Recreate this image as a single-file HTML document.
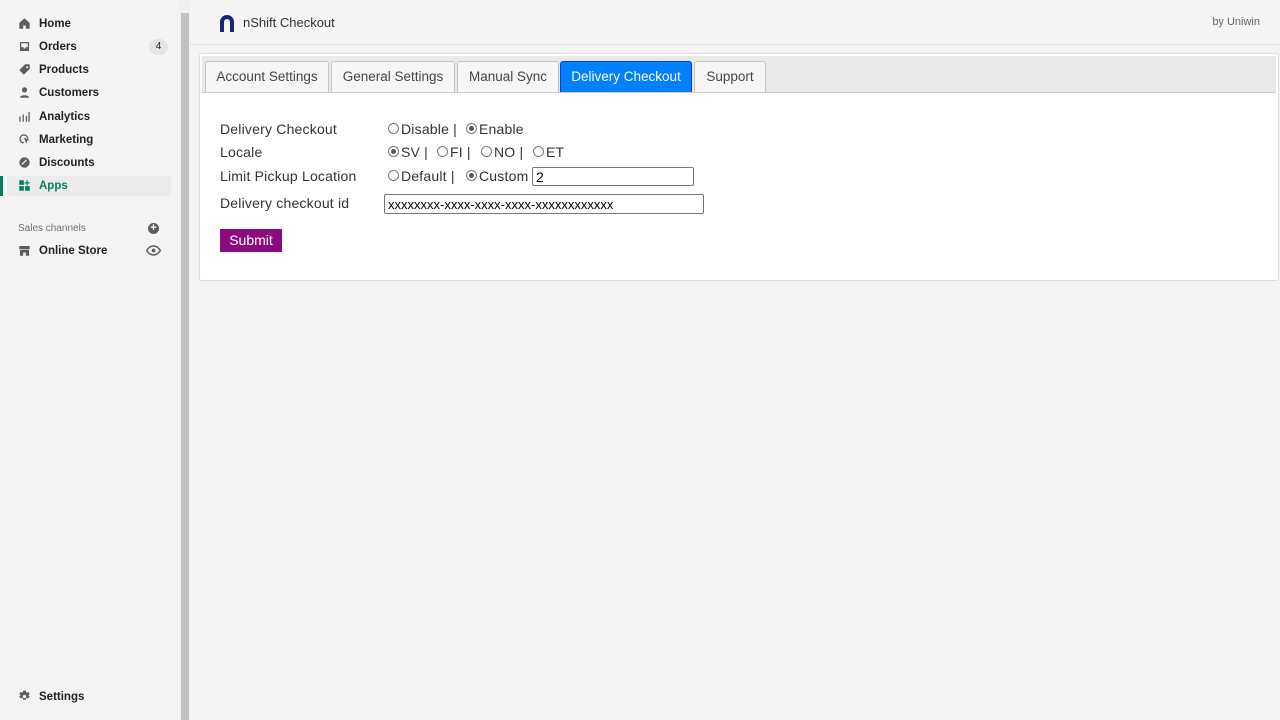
<!DOCTYPE html>
<html><head><style>
body{margin:0;width:1280px;height:720px;background:#f4f4f4;font-family:"Liberation Sans",sans-serif;position:relative;overflow:hidden}
.side{position:absolute;left:0;top:0;width:179px;height:720px;background:#f4f4f4}
.item{position:absolute;left:18px;font-size:11.5px;font-weight:bold;color:#202223;display:flex;align-items:center}
.item svg{width:13px;height:13px;margin-right:8px;fill:#5c5f62}
.scroll{position:absolute;left:179px;top:0;width:11px;height:720px;background:#f0f0f0}
.thumb{position:absolute;left:181px;top:13px;width:8px;height:707px;background:#c1c1c1}
.hdr{position:absolute;left:190px;top:0;width:1090px;height:44px;background:#f5f5f5;border-bottom:1px solid #e1e1e1}
.panel{position:absolute;left:199px;top:53px;width:1078px;height:226px;background:#fff;border:1px solid #ddd;border-radius:3px}
.tabs{position:absolute;left:2px;top:2px;right:2px;height:36px;background:#e9e9e9;border-bottom:1px solid #ccc}
.tab{position:absolute;top:5px;height:30px;background:#f6f6f6;border:1px solid #c5c5c5;border-bottom:none;border-radius:3px 3px 0 0;font-size:13.5px;color:#454545;line-height:29px;text-align:center}
.lbl{position:absolute;left:220px;font-size:14px;color:#333;letter-spacing:.2px}
.o{position:absolute;font-size:14px;color:#333;white-space:pre;letter-spacing:.2px}
.r{display:inline-block;width:9px;height:9px;border:1px solid #777;border-radius:50%;vertical-align:0;margin-right:2px;position:relative}
.r.on::after{content:"";position:absolute;left:2px;top:2px;width:5px;height:5px;border-radius:50%;background:#555}
input{position:absolute;border:1px solid #767676;height:18px;box-sizing:border-box;font-size:13px;padding:0 3px;font-family:"Liberation Sans",sans-serif;border-radius:2px}
</style></head><body>
<div class="side">
<div class="item" style="top:17px"><svg viewBox="0 0 20 20"><path d="M10 2l8 7v9h-6v-5H8v5H2V9z"/></svg>Home</div>
<div class="item" style="top:40px"><svg viewBox="0 0 20 20"><path d="M3 3h14v14H3zM5 5v6h3l1 2h2l1-2h3V5z"/></svg>Orders</div>
<div style="position:absolute;left:149px;top:39px;width:19px;height:16px;border-radius:8px;background:#e4e5e7;font-size:10px;text-align:center;line-height:16px;color:#202223">4</div>
<div class="item" style="top:63px"><svg viewBox="0 0 20 20"><path d="M11 2h7v7l-9 9-7-7zM14 5a1.5 1.5 0 100 3 1.5 1.5 0 000-3z"/></svg>Products</div>
<div class="item" style="top:86px"><svg viewBox="0 0 20 20"><circle cx="10" cy="6" r="4"/><path d="M3 18c0-5 14-5 14 0z"/></svg>Customers</div>
<div class="item" style="top:110px"><svg viewBox="0 0 20 20"><path d="M2 10h2v8H2zM7 7h2v11H7zM12 9h2v9h-2zM16 3h2v15h-2z"/></svg>Analytics</div>
<div class="item" style="top:133px"><svg viewBox="0 0 20 20"><path d="M9 2a7 7 0 017 7h-2a5 5 0 10-5 5v2A7 7 0 019 2zM9 7l9 4-4 1-1 5z"/></svg>Marketing</div>
<div class="item" style="top:156px"><svg viewBox="0 0 20 20"><circle cx="10" cy="10" r="8"/><path d="M6 13l7-7" stroke="#f4f4f4" stroke-width="2"/></svg>Discounts</div>
<div style="position:absolute;left:0;top:176px;width:3px;height:20px;background:#008060"></div>
<div style="position:absolute;left:7px;top:176px;width:164px;height:20px;background:#ebebeb;border-radius:3px"></div>
<div class="item" style="top:179px;color:#007f5f"><svg viewBox="0 0 20 20" style="fill:#007f5f"><path d="M2 2h7v7H2zM2 11h7v7H2zM11 11h7v7h-7zM13 2h2v3h3v2h-3v3h-2V7h-3V5h3z"/></svg>Apps</div>
<div style="position:absolute;left:18px;top:223px;font-size:10px;color:#6d7175">Sales channels</div>
<div style="position:absolute;left:148px;top:223px;width:11px;height:11px;border-radius:50%;background:#5c5f62;color:#fff;font-size:11px;line-height:11px;text-align:center;font-weight:bold">+</div>
<div class="item" style="top:244px"><svg viewBox="0 0 20 20"><path d="M2 3h16v5H2zM3 9h14v9h-5v-5H8v5H3z"/></svg>Online Store</div>
<svg style="position:absolute;left:146px;top:245px" width="15" height="11" viewBox="0 0 20 14"><path d="M10 1C4 1 1 7 1 7s3 6 9 6 9-6 9-6-3-6-9-6z" fill="none" stroke="#5c5f62" stroke-width="2"/><circle cx="10" cy="7" r="2.5" fill="#5c5f62"/></svg>
<div class="item" style="top:690px"><svg viewBox="0 0 20 20"><path d="M8 1h4l1 3 3-1 2 3-2 2 2 2-2 3-3-1-1 3H8l-1-3-3 1-2-3 2-2-2-2 2-3 3 1z"/><circle cx="10" cy="10" r="2.5" fill="#f4f4f4"/></svg>Settings</div>
</div>
<div class="scroll"></div><div class="thumb"></div>
<div class="hdr">
<svg style="position:absolute;left:28px;top:13px" width="18" height="19" viewBox="0 0 18 19"><path d="M2 19V9a7 7 0 0114 0v10h-4V9a3 3 0 00-6 0v10z" fill="#1a237e"/></svg>
<div style="position:absolute;left:53px;top:15px;font-size:13px;color:#333">nShift Checkout</div>
<div style="position:absolute;right:20px;top:16px;font-size:11px;color:#666">by Uniwin</div>
</div>
<div class="panel">
<div class="tabs">
<div class="tab" style="left:3px;width:122px">Account Settings</div>
<div class="tab" style="left:129px;width:122px">General Settings</div>
<div class="tab" style="left:255px;width:100px">Manual Sync</div>
<div class="tab" style="left:358px;width:130px;background:#007fff;border-color:#003eff;color:#fff">Delivery Checkout</div>
<div class="tab" style="left:492px;width:70px">Support</div>
</div>
</div>
<div class="lbl" style="top:121px">Delivery Checkout</div>
<div class="lbl" style="top:144px">Locale</div>
<div class="lbl" style="top:168px">Limit Pickup Location</div>
<div class="lbl" style="top:195px">Delivery checkout id</div>
<div class="o" style="left:388px;top:121px"><span class="r"></span>Disable |</div>
<div class="o" style="left:466px;top:121px"><span class="r on"></span>Enable</div>
<div class="o" style="left:388px;top:144px"><span class="r on"></span>SV |</div>
<div class="o" style="left:437px;top:144px"><span class="r"></span>FI |</div>
<div class="o" style="left:481px;top:144px"><span class="r"></span>NO |</div>
<div class="o" style="left:533px;top:144px"><span class="r"></span>ET</div>
<div class="o" style="left:388px;top:168px"><span class="r"></span>Default |</div>
<div class="o" style="left:466px;top:168px"><span class="r on"></span>Custom</div>
<input style="left:532px;top:167px;width:162px;height:19px;font-size:14px" value="2">
<input style="left:384px;top:194px;width:320px;height:20px" value="xxxxxxxx-xxxx-xxxx-xxxx-xxxxxxxxxxxx">
<div style="position:absolute;left:220px;top:229px;width:62px;height:23px;background:#8b0a80;color:#fff;font-size:14px;text-align:center;line-height:23px">Submit</div>
</body></html>
